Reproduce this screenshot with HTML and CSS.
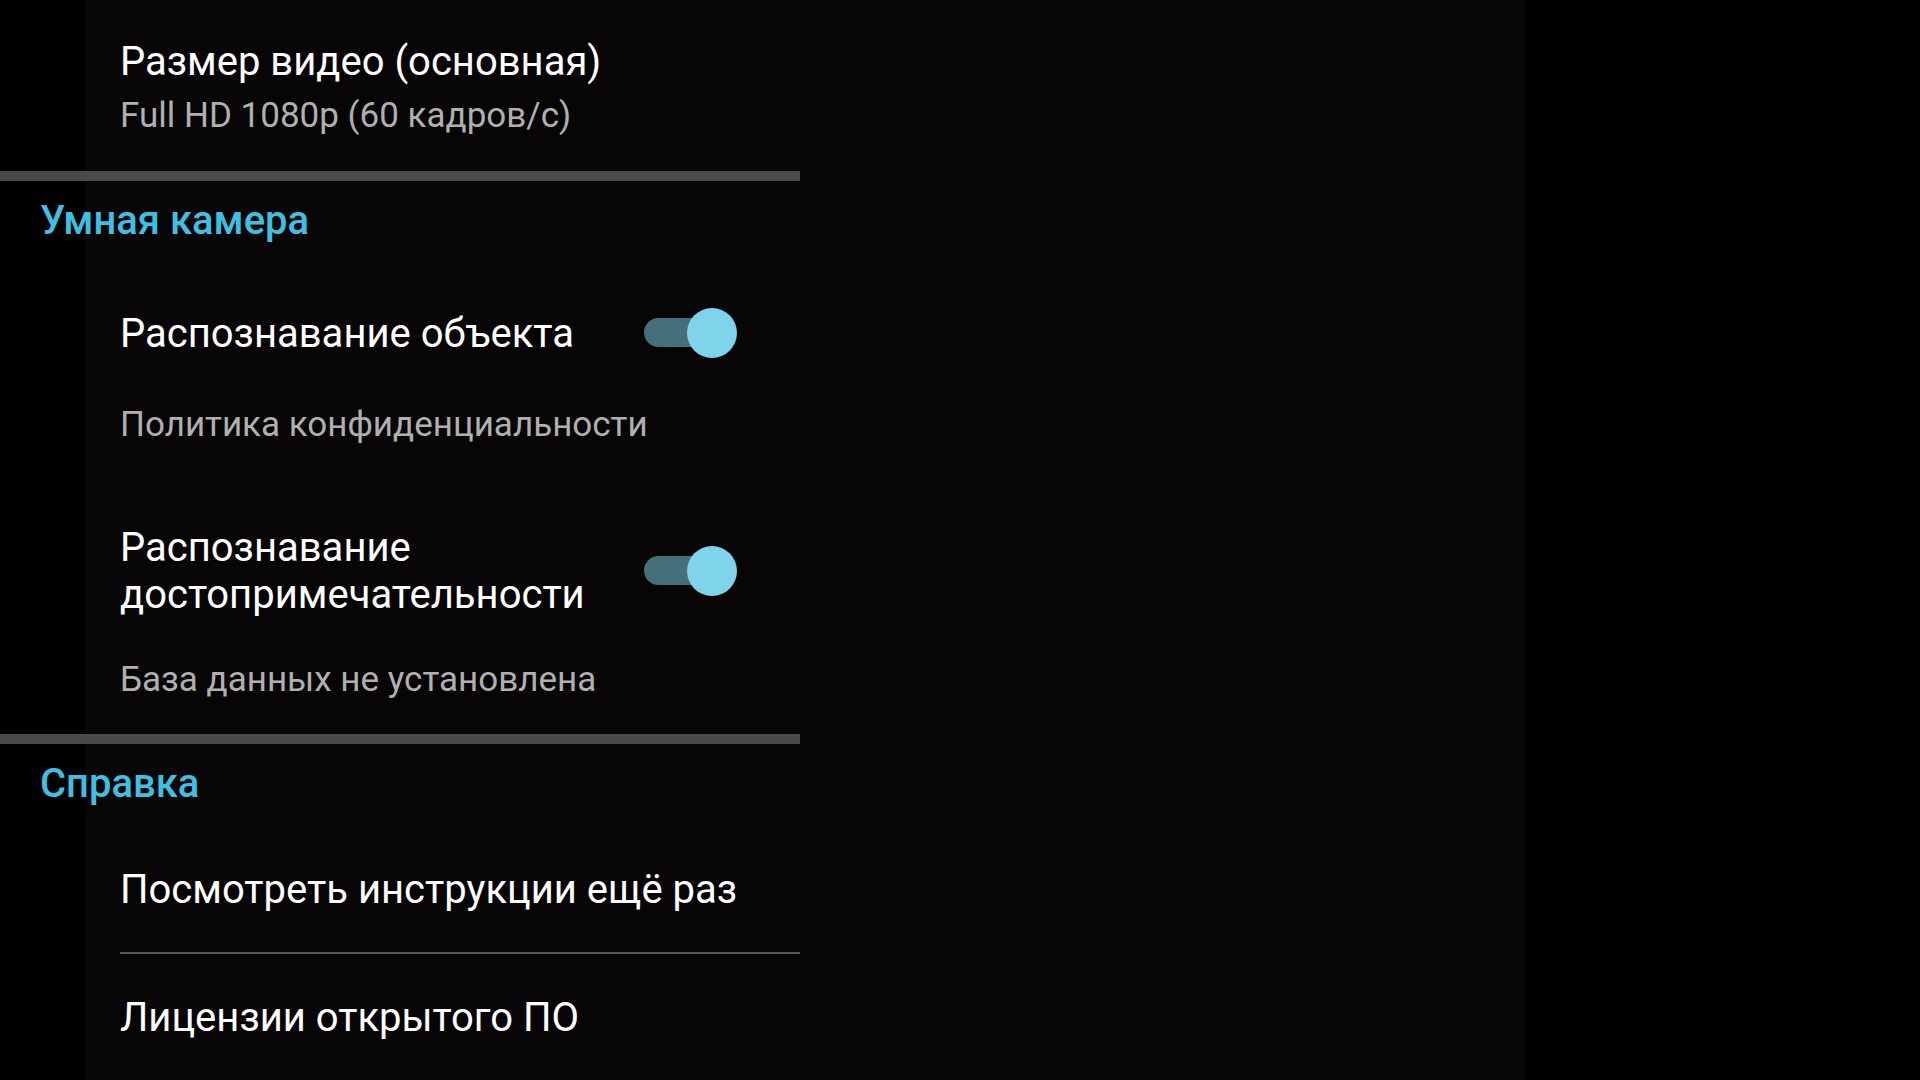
FILE: index.html
```html
<!DOCTYPE html>
<html lang="ru">
<head>
<meta charset="utf-8">
<title>Настройки камеры</title>
<link rel="stylesheet" href="styles.css">
</head>
<body>
<div class="screen">
  <div class="list">
    <div class="pref pref-top">
      <div class="title">Размер видео (основная)</div>
      <div class="summary summary-under">Full HD 1080p (60 кадров/с)</div>
    </div>

    <div class="section-divider"></div>
    <div class="category">Умная камера</div>

    <div class="pref pref-switch row-object">
      <div class="title">Распознавание объекта</div>
      <div class="switch"><span class="track"></span><span class="thumb"></span></div>
    </div>
    <div class="pref pref-link row-privacy">
      <div class="summary">Политика конфиденциальности</div>
    </div>

    <div class="pref pref-switch row-landmark">
      <div class="title">Распознавание<br>достопримечательности</div>
      <div class="switch"><span class="track"></span><span class="thumb"></span></div>
    </div>
    <div class="pref pref-link row-db">
      <div class="summary">База данных не установлена</div>
    </div>

    <div class="section-divider divider-two"></div>
    <div class="category">Справка</div>

    <div class="pref row-guide">
      <div class="title">Посмотреть инструкции ещё раз</div>
    </div>
    <div class="item-divider"></div>
    <div class="pref row-license">
      <div class="title">Лицензии открытого ПО</div>
    </div>
  </div>
</div>
</body>
</html>
```

FILE: styles.css
```css
html, body {
  margin: 0;
  padding: 0;
  width: 1920px;
  height: 1080px;
  overflow: hidden;
  background: #000;
}

body {
  font-family: Roboto, "Noto Sans", "Liberation Sans", sans-serif;
  -webkit-font-smoothing: antialiased;
}

.screen {
  width: 1920px;
  height: 1080px;
  background: linear-gradient(to right,
    #000 0, #000 85px,
    #070505 85px, #070505 1525px,
    #000 1525px, #000 100%);
}

.list {
  width: 800px;
  display: flex;
  flex-direction: column;
}

.pref {
  padding-left: 120px;
}

.title {
  font-size: 40px;
  line-height: 47px;
  color: #ffffff;
  white-space: nowrap;
}

.summary {
  font-size: 35px;
  line-height: 41px;
  color: #b0b0b0;
  white-space: nowrap;
}

.pref-top {
  padding-top: 38px;
  padding-bottom: 35px;
}

.summary-under {
  margin-top: 10px;
}

.section-divider {
  height: 10px;
  background: #4a4a4a;
}

.category {
  padding-left: 40px;
  margin-top: 16px;
  font-size: 40px;
  line-height: 47px;
  font-weight: 500;
  color: #3fbfe1;
}

.pref-switch {
  display: flex;
  align-items: center;
  justify-content: space-between;
  padding-right: 63px;
}

.row-object {
  margin-top: 64px;
}

.row-privacy {
  margin-top: 46px;
}

.row-landmark {
  margin-top: 79px;
}

.row-db {
  margin-top: 41px;
}

.divider-two {
  margin-top: 34px;
}

.row-guide {
  margin-top: 59px;
}

.item-divider {
  margin-top: 39px;
  margin-left: 120px;
  height: 2px;
  background: #555555;
}

.row-license {
  margin-top: 40px;
}

.switch {
  position: relative;
  width: 93px;
  height: 50px;
  flex: none;
}

.track {
  position: absolute;
  left: 0;
  top: 10px;
  width: 82px;
  height: 29px;
  border-radius: 15px;
  background: #45707a;
}

.thumb {
  position: absolute;
  right: 0;
  top: 0;
  width: 50px;
  height: 50px;
  border-radius: 50%;
  background: #7fd3ea;
}
```
